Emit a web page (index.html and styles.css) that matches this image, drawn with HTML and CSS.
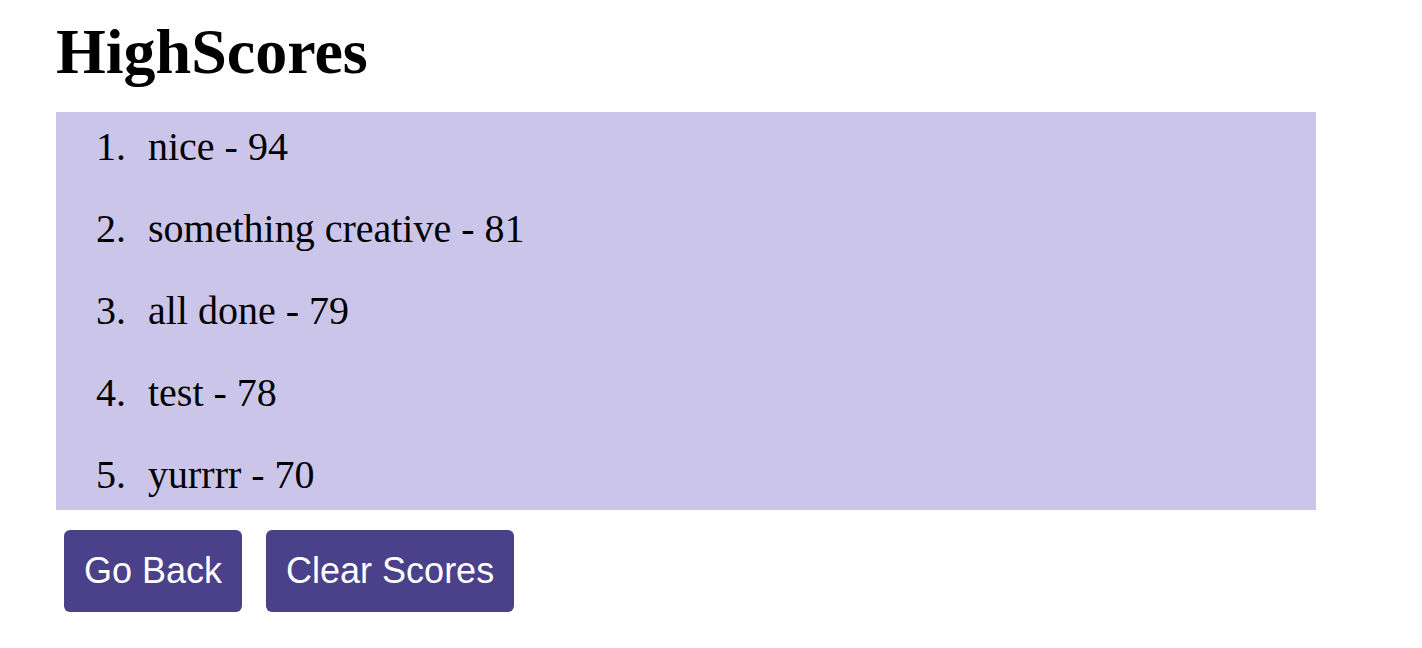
FILE: index.html
```html
<!DOCTYPE html>
<html lang="en">
<head>
<meta charset="utf-8">
<title>HighScores</title>
<link rel="stylesheet" href="styles.css">
</head>
<body>
<main class="page">
  <h1 class="title">HighScores</h1>
  <ol class="scores">
    <li class="score">nice - 94</li>
    <li class="score">something creative - 81</li>
    <li class="score">all done - 79</li>
    <li class="score">test - 78</li>
    <li class="score">yurrrr - 70</li>
  </ol>
  <div class="actions">
    <button class="btn">Go Back</button>
    <button class="btn">Clear Scores</button>
  </div>
</main>
</body>
</html>
```

FILE: styles.css
```css
html, body {
  margin: 0;
  padding: 0;
  background: #ffffff;
}

body {
  font-family: "Liberation Serif", "Times New Roman", serif;
  color: #000000;
}

.page {
  padding: 16px 0 0 56px;
}

.title {
  margin: 0 0 25px 0;
  font-size: 64px;
  font-weight: bold;
  line-height: 71px;
}

.scores {
  width: 1260px;
  margin: 0;
  padding: 12px 0 12px 80px;
  box-sizing: border-box;
  background: #cbc6e9;
  font-size: 40px;
  line-height: 46px;
}

.score {
  padding-left: 12px;
}

.score + .score {
  margin-top: 36px;
}

.actions {
  display: flex;
  gap: 24px;
  padding: 20px 0 0 8px;
}

.btn {
  font-family: "Liberation Sans", Arial, sans-serif;
  font-size: 36px;
  line-height: 42px;
  color: #ffffff;
  background: #4a418a;
  border: none;
  border-radius: 6px;
  padding: 20px 20px;
  margin: 0;
  cursor: pointer;
}
```
